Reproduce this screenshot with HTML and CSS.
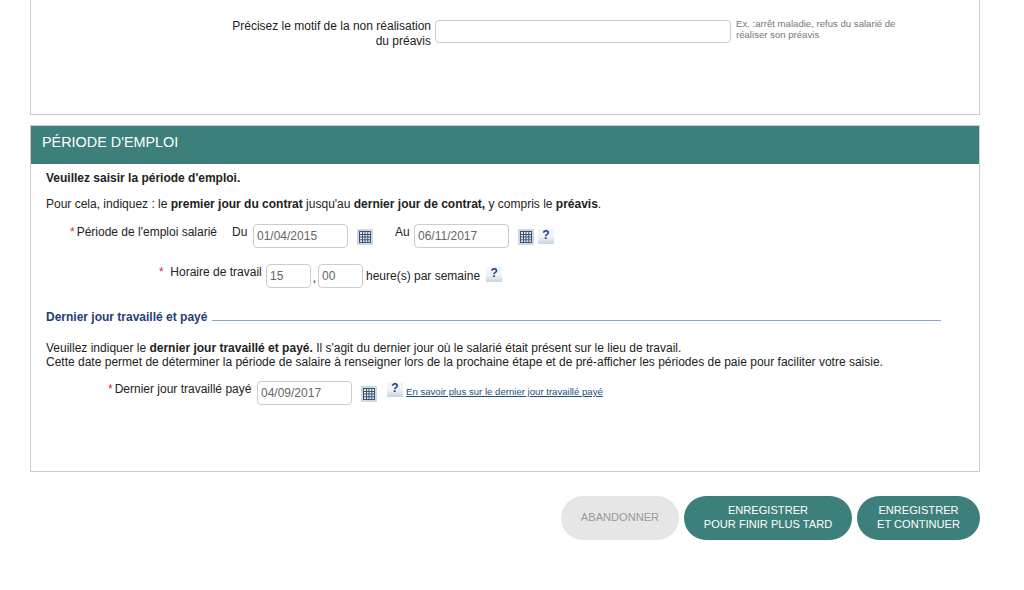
FILE: index.html
```html
<!DOCTYPE html>
<html lang="fr">
<head>
    <meta charset="UTF-8">
    <title>Période d'emploi</title>
    <link rel="stylesheet" href="styles.css">
</head>
<body>

    <!-- fin du bloc précédent -->
    <div class="panel panel-top">
        <div class="motif-row">
            <label class="motif-label">Précisez le motif de la non réalisation du préavis</label>
            <input type="text" class="motif-input">
            <p class="hint">Ex. :arrêt maladie, refus du salarié de réaliser son préavis</p>
        </div>
    </div>

    <!-- période d'emploi -->
    <div class="panel panel-emploi">
        <h2 class="panel-title">PÉRIODE D'EMPLOI</h2>
        <div class="panel-body">
            <p class="intro"><b>Veuillez saisir la période d'emploi.</b></p>
            <p class="intro-2">Pour cela, indiquez : le <b>premier jour du contrat</b> jusqu'au <b>dernier jour de contrat,</b> y compris le <b>préavis</b>.</p>

            <div class="row row-periode">
                <span class="lbl lbl-periode"><span class="req">*</span>Période de l'emploi salarié</span>
                <span class="lbl lbl-du">Du</span>
                <input type="text" class="date" value="01/04/2015">
                <svg class="cal" viewBox="0 0 16 16"><use href="#cal-icon"/></svg>
                <span class="lbl lbl-au">Au</span>
                <input type="text" class="date" value="06/11/2017">
                <svg class="cal" viewBox="0 0 16 16"><use href="#cal-icon"/></svg>
                <span class="help">?</span>
            </div>

            <div class="row row-horaire">
                <span class="lbl lbl-horaire"><span class="req">*</span>&nbsp; Horaire de travail</span>
                <input type="text" class="small" value="15">
                <span class="comma">,</span>
                <input type="text" class="small" value="00">
                <span class="unit">heure(s) par semaine</span>
                <span class="help">?</span>
            </div>

            <div class="legend">
                <span>Dernier jour travaillé et payé</span>
                <div class="legend-line"></div>
            </div>

            <p class="desc">Veuillez indiquer le <b>dernier jour travaillé et payé.</b> Il s'agit du dernier jour où le salarié était présent sur le lieu de travail.<br>Cette date permet de déterminer la période de salaire à renseigner lors de la prochaine étape et de pré-afficher les périodes de paie pour faciliter votre saisie.</p>

            <div class="row row-dernier">
                <span class="lbl lbl-dernier"><span class="req">*</span>Dernier jour travaillé payé</span>
                <input type="text" class="date" value="04/09/2017">
                <svg class="cal" viewBox="0 0 16 16"><use href="#cal-icon"/></svg>
                <span class="help">?</span>
                <a href="#" class="more">En savoir plus sur le dernier jour travaillé payé</a>
            </div>
        </div>
    </div>

    <!-- boutons -->
    <div class="actions">
        <button class="btn btn-off">ABANDONNER</button>
        <button class="btn btn-save">ENREGISTRER<br>POUR FINIR PLUS TARD</button>
        <button class="btn btn-next">ENREGISTRER<br>ET CONTINUER</button>
    </div>

    <svg width="0" height="0" class="defs">
        <symbol id="cal-icon" viewBox="0 0 16 16">
            <rect x="0" y="0" width="16" height="16" fill="#ccd8e4"/>
            <rect x="2.5" y="2.5" width="11" height="11" fill="#e8eef4" stroke="#3a5370"/>
            <path d="M2.5 5.5h11M2.5 8h11M2.5 10.8h11M5.5 2.5v11M8 2.5v11M10.8 2.5v11" stroke="#3a5370" stroke-width="1" fill="none"/>
        </symbol>
    </svg>

</body>
</html>
```

FILE: styles.css
```css
html, body {
    margin: 0;
    padding: 0;
}

body {
    width: 1024px;
    height: 590px;
    overflow: hidden;
    background-color: #fff;
    font-family: "Liberation Sans", Arial, sans-serif;
    font-size: 12px;
    color: #222;
}

.defs {
    position: absolute;
}

input {
    box-sizing: border-box;
    border: 1px solid #ccc;
    border-radius: 4px;
    background: #fff;
    font-family: "Liberation Sans", Arial, sans-serif;
    font-size: 12px;
    color: #666;
    padding: 0 3px;
    margin: 0;
}

.panel {
    box-sizing: border-box;
    width: 950px;
    margin-left: 30px;
    border: 1px solid #ccc;
}

/* bloc du haut */
.panel-top {
    height: 115px;
    border-top: none;
    padding-top: 19px;
}

.motif-row {
    display: flex;
    align-items: flex-start;
}

.motif-label {
    box-sizing: border-box;
    width: 400px;
    padding-left: 190px;
    line-height: 15px;
    text-align: right;
}

.motif-input {
    width: 296px;
    height: 23px;
    margin-top: 1px;
    margin-left: 4px;
}

.hint {
    width: 170px;
    margin: 0 0 0 5px;
    font-size: 9.6px;
    line-height: 10.5px;
    color: #777;
}

/* période d'emploi */
.panel-emploi {
    height: 347px;
    margin-top: 10px;
}

.panel-title {
    margin: 0;
    height: 38px;
    padding-left: 11px;
    background-color: #3c7f7b;
    color: #fff;
    font-size: 14.4px;
    font-weight: normal;
    line-height: 33px;
}

.panel-body {
    padding: 7px 0 0 15px;
}

.intro {
    margin: 0;
    line-height: 14px;
}

.intro-2 {
    margin: 12px 0 0;
    line-height: 14px;
}

.row {
    display: flex;
    align-items: flex-start;
}

.lbl {
    line-height: 14px;
    padding-top: 2px;
}

.req {
    color: #c33;
}

.lbl-periode .req,
.lbl-dernier .req {
    margin-right: 2px;
}

.date {
    width: 95px;
    height: 24px;
    margin-top: 1px;
}

.cal {
    width: 16px;
    height: 16px;
    margin-top: 6px;
}

.help {
    box-sizing: border-box;
    width: 16px;
    height: 15px;
    background: linear-gradient(#f2f5f8 50%, #c5d4e2);
    color: #1f3f78;
    font-size: 12px;
    font-weight: bold;
    line-height: 13px;
    text-align: center;
}

.row-periode {
    margin-top: 12px;
}

.lbl-periode {
    margin-left: 24px;
    width: 161px;
}

.lbl-du {
    margin-left: 1px;
    width: 21px;
}

.row-periode .cal {
    margin-left: 9px;
}

.lbl-au {
    margin-left: 22px;
    width: 19px;
}

.row-periode .help {
    margin-left: 4px;
    margin-top: 6px;
}

.row-horaire {
    margin-top: 15px;
}

.lbl-horaire {
    margin-left: 113px;
    width: 107px;
}

.small {
    width: 45px;
    height: 24px;
    margin-top: 1px;
}

.comma {
    width: 7px;
    padding-top: 8px;
    text-align: center;
}

.unit {
    margin-left: 3px;
    padding-top: 6px;
}

.row-horaire .help {
    margin-left: 6px;
    margin-top: 4px;
}

.legend {
    display: flex;
    align-items: flex-start;
    margin-top: 22px;
    width: 895px;
    color: #1f3f78;
    font-size: 12px;
    font-weight: bold;
    line-height: 14px;
}

.legend-line {
    flex: 1;
    height: 1px;
    margin-left: 5px;
    margin-top: 10px;
    background-color: #8aa6c6;
}

.desc {
    margin: 17px 0 0;
    line-height: 14px;
}

.row-dernier {
    margin-top: 11px;
}

.lbl-dernier {
    margin-left: 62px;
    width: 149px;
}

.row-dernier .cal {
    margin-left: 9px;
    margin-top: 6px;
}

.row-dernier .help {
    margin-left: 10px;
    margin-top: 2px;
}

.more {
    margin-left: 3px;
    margin-top: 6px;
    color: #1f4f78;
    font-size: 9.6px;
    line-height: 12px;
}

/* boutons */
.actions {
    display: flex;
    justify-content: flex-end;
    gap: 5px;
    width: 950px;
    margin: 24px 0 0 30px;
}

.btn {
    height: 44px;
    border: none;
    border-radius: 22px;
    padding: 0 0 2px;
    font-family: "Liberation Sans", Arial, sans-serif;
    font-size: 11.1px;
    line-height: 14px;
    color: #fff;
    background-color: #3c7f7b;
}

.btn-off {
    width: 118px;
    background-color: #e6e6e6;
    color: #999;
}

.btn-save {
    width: 168px;
}

.btn-next {
    width: 123px;
}
```
